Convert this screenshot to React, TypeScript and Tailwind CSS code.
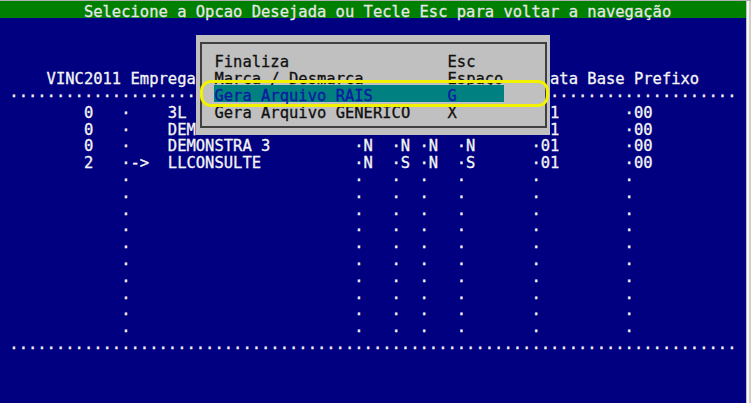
import React from 'react'

// 80x24 text-mode screen, one cell = 9.325px x 16.8px
const COLS = 80

type Part = [number, string]

const line = (parts: Part[]) => {
  const cells = Array(COLS).fill(' ')
  parts.forEach(([col, text]) => {
    ;[...text].forEach((ch, i) => {
      if (col + i < COLS) cells[col + i] = ch
    })
  })
  return cells.join('').replace(/\s+$/, '')
}

const columnDots = (): Part[] => [13, 38, 42, 45, 49, 57, 67].map((c) => [c, '·'] as Part)

const dataRow = (num: string, mark: string, name: string, flags: string[]): string =>
  line([
    [9, num],
    [13, mark],
    [18, name],
    [38, '·' + flags[0]],
    [42, '·' + flags[1]],
    [45, '·' + flags[2]],
    [49, '·' + flags[3]],
    [57, '·01'],
    [67, '·00'],
  ])

// rows 2..7 are partly covered by the popup (cols 21-58), only the visible parts are written
const rows: string[] = [
  '',
  '',
  '',
  line([[5, 'VINC2011 Emprega'], [59, 'ata Base Prefixo']]),
  line([[1, '·'.repeat(20)], [59, '·'.repeat(20)]]),
  line([[9, '0'], [13, '·'], [18, '3L'], [59, '1'], [67, '·00']]),
  line([[9, '0'], [13, '·'], [18, 'DEM'], [59, '1'], [67, '·00']]),
  dataRow('0', '·', 'DEMONSTRA 3', ['N', 'N', 'N', 'N']),
  dataRow('2', '·->', 'LLCONSULTE', ['N', 'S', 'N', 'S']),
  ...Array.from({ length: 10 }, () => line(columnDots())),
  line([[1, '·'.repeat(78)]]),
  '',
  '',
  '',
]

const pad = (s: string, n: number) => s + ' '.repeat(Math.max(0, n - s.length))

const menu = [
  { label: 'Finaliza', key: 'Esc' },
  { label: 'Marca / Desmarca', key: 'Espaço' },
  { label: 'Gera Arquivo RAIS', key: 'G', active: true },
  { label: 'Gera Arquivo GENERICO', key: 'X' },
]

const cell = 'h-[16.8px] leading-[22.8px] whitespace-pre'

const App: React.FC = () => {
  return (
    <div className="w-[751px] h-[403px] overflow-hidden flex border-t border-[#b0b0b0] bg-[#d4d0c8]">
      {/* Console area */}
      <div className="relative w-[746px] h-full bg-[#000080] text-[#f4f4f4] font-['DejaVu_Sans_Mono',monospace] text-[15.49px] [-webkit-text-stroke:0.3px_currentColor]">
        <div className="flex flex-col">
          <div className={`${cell} bg-[#008000] text-[#e6e6e6]`}>
            {line([[9, 'Selecione a Opcao Desejada ou Tecle Esc para voltar a navegação']])}
          </div>
          {rows.map((text, i) => (
            <div key={i} className={cell}>
              {text}
            </div>
          ))}
        </div>

        {/* Popup menu */}
        <div className="absolute left-[195.8px] top-[33.6px] w-[354.35px] h-[100.8px] bg-[#c0c0c0] text-[#101010]">
          <div className="absolute left-[4px] top-[7.5px] right-[3.5px] bottom-[7px] border-2 border-[#404040]" />
          <div className="relative flex flex-col pt-[16.8px]">
            {menu.map((item) => (
              <div key={item.label} className="flex h-[16.8px] pl-[18.65px]">
                <div
                  className={
                    item.active
                      ? `${cell} w-[289.1px] bg-[#008080] text-[#0a1aa0]`
                      : cell
                  }
                >
                  {pad(item.label, 25) + item.key}
                </div>
              </div>
            ))}
          </div>
        </div>

        {/* Yellow highlight annotation */}
        <div className="absolute left-[200px] top-[79px] w-[349px] h-[27px] rounded-[11px] border-[3px] border-[#f2f200]" />
      </div>

      {/* Window edge */}
      <div className="flex h-full">
        <div className="w-px bg-[#c0c0c0]" />
        <div className="w-[2px] bg-[#f6f6f6]" />
        <div className="w-[2px] bg-[#d4d0c8]" />
      </div>
    </div>
  )
}

export default App
